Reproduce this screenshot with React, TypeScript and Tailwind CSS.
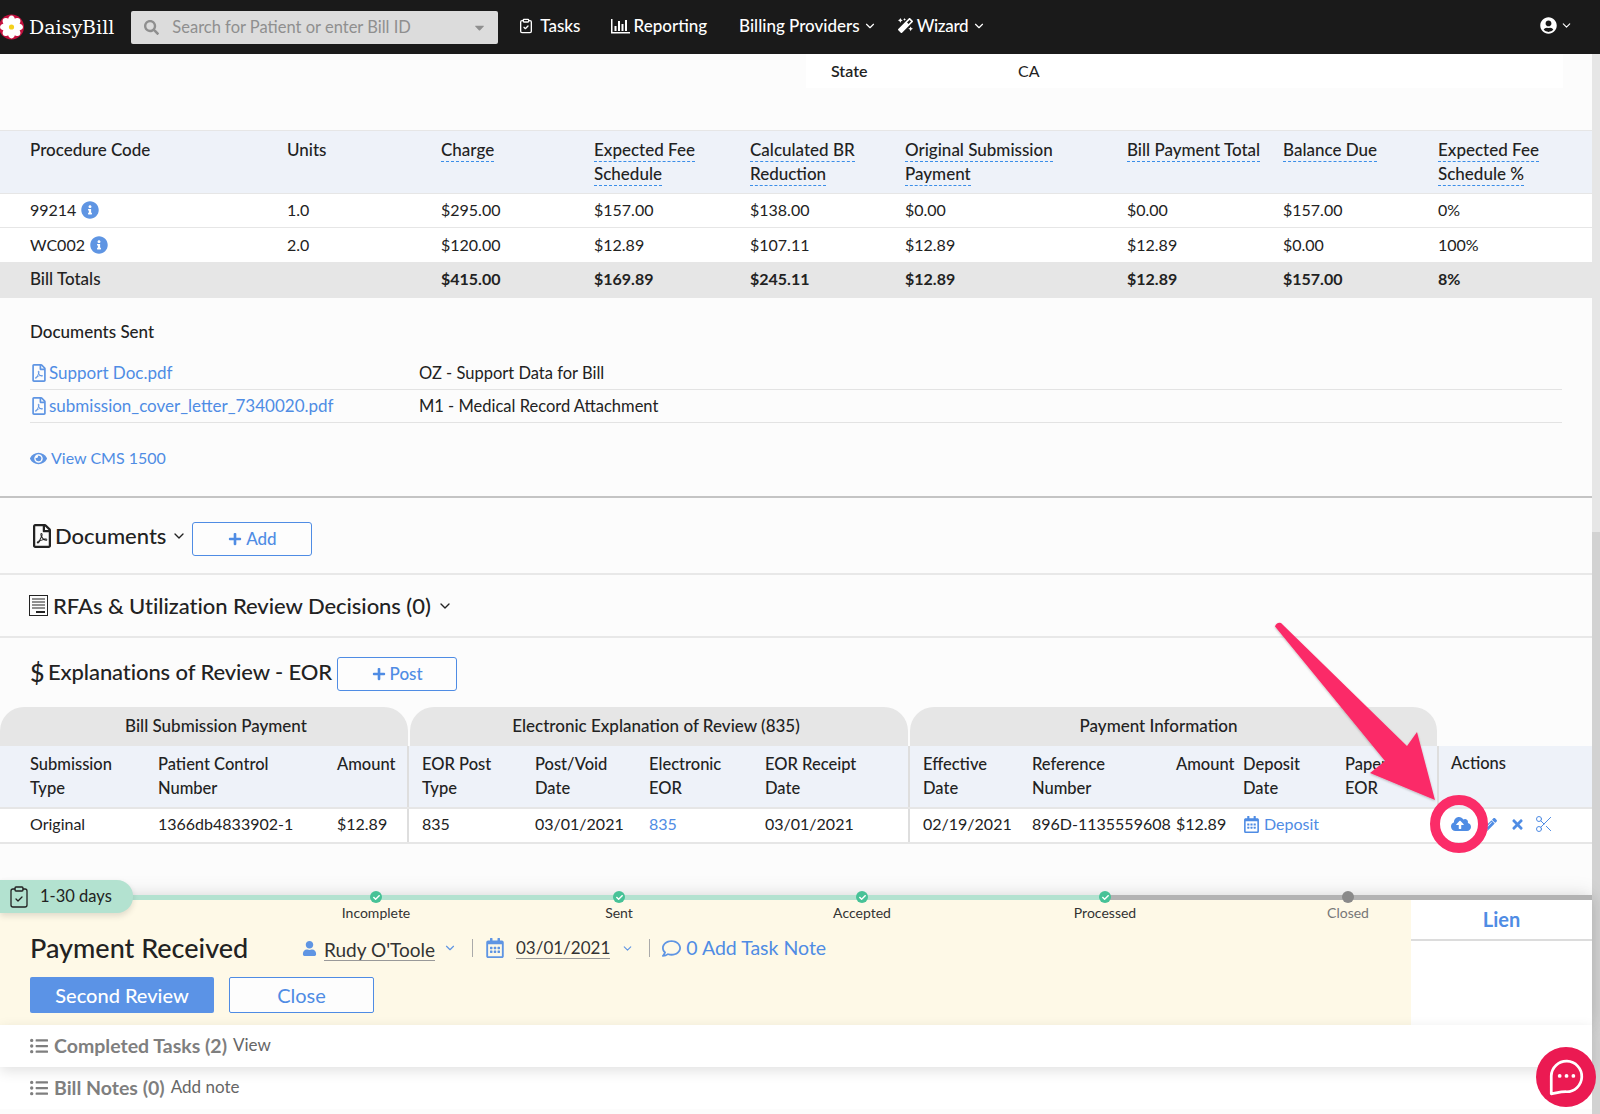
import React from "react";
import { ChevronDown, ClipboardCheck, Scissors } from "lucide-react";
import {
  FaInfoCircle, FaRegFilePdf, FaEye, FaPlus, FaCloudUploadAlt, FaPencilAlt, FaTimes,
  FaRegCalendarAlt, FaUser, FaRegComment, FaListUl, FaUserCircle, FaMagic, FaSearch, FaCheck, FaCaretDown,
} from "react-icons/fa";

const font = { fontFamily: "Lato, 'Open Sans', sans-serif" };

function Daisy() {
  const petals = [0, 45, 90, 135, 180, 225, 270, 315];
  return (
    <svg width="25" height="26" viewBox="-12.5 -13 25 26" className="shrink-0 -ml-[1px]">
      <circle r="12.5" fill="#c3113f" />
      {petals.map((a) => (
        <ellipse key={a} cx="0" cy="-6.5" rx="3.6" ry="5" fill="#fff" transform={`rotate(${a})`} />
      ))}
      <circle r="2.6" fill="#f4d01c" />
    </svg>
  );
}

function Bars() {
  return (
    <svg width="19" height="16" viewBox="0 0 19 16" fill="#fff" className="shrink-0">
      <rect x="0" y="1" width="1.5" height="14" />
      <rect x="0" y="14" width="19" height="1.5" />
      <rect x="3.5" y="8" width="2" height="5" />
      <rect x="7" y="3" width="2" height="10" />
      <rect x="10.5" y="6" width="2" height="7" />
      <rect x="14" y="2" width="2" height="11" />
    </svg>
  );
}

function Tip({ children }: { children: React.ReactNode }) {
  return <span className="border-b border-dashed border-[#3b8ee8] pb-[1px]">{children}</span>;
}

const billCols = "grid grid-cols-[257px_154px_153px_156px_155px_222px_156px_155px_1fr]";

function Info() {
  return <FaInfoCircle className="inline text-[#5f95e3] text-[18px] ml-[5px] -mt-[2px]" />;
}

function BillTable() {
  return (
    <div className="text-[16px] text-[#222]">
      <div className={`${billCols} h-[64px] pl-[30px] pt-[7px] bg-[#eef2f9] border-y border-[#e6e6e6] leading-[24px] font-medium text-[17px]`}>
        <div>Procedure Code</div>
        <div>Units</div>
        <div><Tip>Charge</Tip></div>
        <div><div><Tip>Expected Fee</Tip></div><div><Tip>Schedule</Tip></div></div>
        <div><div><Tip>Calculated BR</Tip></div><div><Tip>Reduction</Tip></div></div>
        <div><div><Tip>Original Submission</Tip></div><div><Tip>Payment</Tip></div></div>
        <div className="whitespace-nowrap"><Tip>Bill Payment Total</Tip></div>
        <div><Tip>Balance Due</Tip></div>
        <div><div><Tip>Expected Fee</Tip></div><div><Tip>Schedule %</Tip></div></div>
      </div>
      <div className={`${billCols} h-[34px] items-center pl-[30px] pb-[2px] bg-white border-b border-[#e6e6e6]`}>
        <div>99214<Info /></div>
        <div>1.0</div><div>$295.00</div><div>$157.00</div><div>$138.00</div><div>$0.00</div><div>$0.00</div><div>$157.00</div><div>0%</div>
      </div>
      <div className={`${billCols} h-[34px] items-center pl-[30px] pb-[1px] bg-white`}>
        <div>WC002<Info /></div>
        <div>2.0</div><div>$120.00</div><div>$12.89</div><div>$107.11</div><div>$12.89</div><div>$12.89</div><div>$0.00</div><div>100%</div>
      </div>
      <div className={`${billCols} h-[36px] items-center pl-[30px] pb-[2px] bg-[#e6e6e6] font-bold`}>
        <div className="font-medium text-[17px]">Bill Totals</div>
        <div></div><div>$415.00</div><div>$169.89</div><div>$245.11</div><div>$12.89</div><div>$12.89</div><div>$157.00</div><div>8%</div>
      </div>
    </div>
  );
}

function DocRow({ name, type }: { name: string; type: string }) {
  return (
    <div className="flex items-center h-[33px] mr-[30px] border-b border-[#e3e3e3] text-[16.5px]">
      <div className="w-[389px] flex items-center gap-[1px] text-[#4f8ce4] text-[17px]">
        <FaRegFilePdf className="text-[18px] text-[#5f95e3]" />
        <span>{name}</span>
      </div>
      <div className="text-[#222]">{type}</div>
    </div>
  );
}

function OutlineButton({ label, className }: { label: string; className: string }) {
  return (
    <div className={`w-[120px] h-[34px] flex items-center justify-center gap-[4px] border border-[#4f8ce4] rounded-[3px] text-[#4f8ce4] text-[17px] bg-[#fdfdfd] ${className}`}>
      <FaPlus className="text-[14px]" />
      <span>{label}</span>
    </div>
  );
}

function Cols({ cols, items, cls }: { cols: string; items: React.ReactNode[]; cls: string }) {
  return (
    <div className={`grid ${cols} ${cls}`}>
      {items.map((it, i) => <div key={i}>{it}</div>)}
    </div>
  );
}

function EorTable() {
  const c1 = "grid-cols-[128px_179px_1fr]";
  const c2 = "grid-cols-[113px_114px_116px_1fr]";
  const c3 = "grid-cols-[109px_144px_67px_102px_1fr]";
  return (
    <div className="text-[16px] text-[#222]">
      <div className="flex h-[39px] font-medium text-[17px]">
        <div className="w-[408px] pl-[24px] pb-[1px] rounded-t-[24px] bg-[#e6e6e6] flex items-center justify-center">Bill Submission Payment</div>
        <div className="w-[498px] ml-[2px] pr-[6px] pb-[1px] rounded-t-[24px] bg-[#e6e6e6] flex items-center justify-center">Electronic Explanation of Review (835)</div>
        <div className="w-[527px] ml-[2px] pr-[30px] pb-[1px] rounded-t-[24px] bg-[#e6e6e6] flex items-center justify-center">Payment Information</div>
      </div>
      <div className="flex h-[63px] bg-[#eef2f9] border-b-2 border-[#e6e6e6] leading-[24px] font-medium text-[16.5px]">
        <div className="w-[409px] pl-[30px] pt-[6px] border-r-2 border-[#dedede]">
          <Cols cols={c1} cls="" items={[<>Submission<br />Type</>, <>Patient Control<br />Number</>, "Amount"]} />
        </div>
        <div className="w-[501px] pl-[13px] pt-[6px] border-r-2 border-[#dedede]">
          <Cols cols={c2} cls="" items={[<>EOR Post<br />Type</>, <>Post/Void<br />Date</>, <>Electronic<br />EOR</>, <>EOR Receipt<br />Date</>]} />
        </div>
        <div className="w-[529px] pl-[13px] pt-[6px] border-r-2 border-[#dedede]">
          <Cols cols={c3} cls="" items={[<>Effective<br />Date</>, <>Reference<br />Number</>, "Amount", <>Deposit<br />Date</>, <>Paper<br />EOR</>]} />
        </div>
        <div className="pl-[12px] pt-[5px]">Actions</div>
      </div>
      <div className="flex h-[35px] bg-white border-b-2 border-[#e6e6e6] items-stretch">
        <div className="w-[409px] pl-[30px] pb-[3px] flex items-center border-r-2 border-[#dedede]">
          <Cols cols={c1} cls="w-full" items={["Original", "1366db4833902-1", "$12.89"]} />
        </div>
        <div className="w-[501px] pl-[13px] pb-[3px] flex items-center border-r-2 border-[#dedede]">
          <Cols cols={c2} cls="w-full" items={["835", "03/01/2021", <span className="text-[#4f8ce4]">835</span>, "03/01/2021"]} />
        </div>
        <div className="w-[529px] pl-[13px] pb-[3px] flex items-center">
          <Cols cols={c3} cls="w-full" items={["02/19/2021", "896D-1135559608", "$12.89",
            <span className="flex items-center gap-[4px] text-[#4f8ce4]"><FaRegCalendarAlt className="text-[17px]" />Deposit</span>, ""]} />
        </div>
        <div className="flex items-center text-[#4f8ce4] pl-[12px] pb-[3px]">
          <FaCloudUploadAlt className="text-[20px] w-[20px]" />
          <FaPencilAlt className="text-[13px] ml-[13px]" />
          <FaTimes className="text-[15px] ml-[13px]" />
          <Scissors size={20} strokeWidth={1.2} className="ml-[9px]" />
        </div>
      </div>
    </div>
  );
}

function Step({ label, done = true }: { label: string; done?: boolean }) {
  return (
    <div className="w-0 flex flex-col items-center relative -top-[9px]">
      <div className={`w-[12px] h-[12px] shrink-0 rounded-full flex items-center justify-center ${done ? "bg-[#47c297]" : "bg-[#8a8a8a]"}`}>
        {done && <FaCheck className="text-white text-[7px]" />}
      </div>
      <div className={`mt-[1px] text-[14px] leading-[17px] whitespace-nowrap ${done ? "text-[#333]" : "text-[#777]"}`}>{label}</div>
    </div>
  );
}

function StatusPanel() {
  return (
    <div className="relative shadow-[0_-4px_18px_rgba(0,0,0,0.07),0_4px_14px_rgba(0,0,0,0.12)] bg-white">
      <div className="h-[5px] flex">
        <div className="w-[1106px] bg-[#b3e2d0]" />
        <div className="flex-1 bg-[#b3b3b3]" />
      </div>
      <div className="flex h-[125px]">
        <div className="w-[1411px] bg-[#fef9e7] pl-[30px] text-[16px]">
          <div className="flex h-[15px] ml-[346px] gap-[243px]">
            <Step label="Incomplete" />
            <Step label="Sent" />
            <Step label="Accepted" />
            <Step label="Processed" />
            <Step label="Closed" done={false} />
          </div>
          <div className="flex items-center mt-[16px] h-[34px]">
            <div className="w-[272px] text-[27px] font-medium text-[#222] whitespace-nowrap">Payment Received</div>
            <FaUser className="text-[#5f95e3] text-[15px]" />
            <span className="ml-[7px] text-[19px] text-[#333] border-b border-[#999] leading-[21px] mt-[3px]">Rudy O'Toole</span>
            <ChevronDown size={14} className="text-[#5f95e3] ml-[8px]" />
            <div className="w-px h-[18px] bg-[#aaa] ml-[15px]" />
            <FaRegCalendarAlt className="text-[#5f95e3] text-[20px] ml-[12px]" />
            <span className="ml-[11px] text-[17px] text-[#333] border-b border-[#999] leading-[21px]">03/01/2021</span>
            <ChevronDown size={13} className="text-[#5f95e3] ml-[11px]" />
            <div className="w-px h-[18px] bg-[#aaa] ml-[15px]" />
            <FaRegComment className="text-[#5f95e3] text-[19px] ml-[12px]" />
            <span className="ml-[5px] text-[19.5px] text-[#4f8ce4] whitespace-nowrap">0 Add Task Note</span>
          </div>
          <div className="flex mt-[12px] gap-[15px]">
            <div className="w-[184px] h-[36px] pb-[1px] rounded-[2px] bg-[#5b93e6] text-white text-[20px] font-medium flex items-center justify-center">Second Review</div>
            <div className="w-[145px] h-[36px] pb-[1px] rounded-[2px] bg-[#fdfdfd] border border-[#4f8ce4] text-[#4f8ce4] text-[20px] flex items-center justify-center">Close</div>
          </div>
        </div>
        <div className="flex-1 bg-white">
          <div className="h-[41px] pb-[2px] border-b-2 border-[#dcdcdc] text-[20px] font-bold text-[#4f8ce4] flex items-center justify-center">Lien</div>
        </div>
      </div>
      <div className="absolute left-0 -top-[15px] w-[133px] h-[33px] rounded-r-[16px] bg-[#b3e2d0] flex items-center pl-[7px] gap-[9px] text-[16.5px] text-[#222] shadow-[0_3px_6px_rgba(0,0,0,0.12)]">
        <ClipboardCheck size={24} strokeWidth={1.3} />
        <span>1-30 days</span>
      </div>
    </div>
  );
}

function Overlay() {
  return (
    <svg className="absolute left-0 top-0 pointer-events-none" width="1600" height="1114" viewBox="0 0 1600 1114">
      <defs>
        <filter id="s" x="-10%" y="-10%" width="120%" height="120%">
          <feDropShadow dx="0" dy="1" stdDeviation="1.2" floodColor="#000" floodOpacity="0.25" />
        </filter>
      </defs>
      <g filter="url(#s)">
        <path d="M1275 626.5 Q1276.5 622 1281 623 L1407 746 L1417 732 L1435 800 L1370 773 L1385 761 Z" fill="#fb2c68" />
      </g>
      <circle cx="1459" cy="824" r="24" fill="none" stroke="#fb2c68" strokeWidth="10" />
    </svg>
  );
}

function Chat() {
  return (
    <div className="absolute left-[1536px] top-[1047px] w-[60px] h-[60px] rounded-full bg-[#eb1a52] flex items-center justify-center">
      <svg width="38" height="40" viewBox="0 0 36 38" fill="none">
        <path d="M4 33 V18 A14.5 14.5 0 1 1 18 33 C12 33 10 34 4 35 Z" stroke="#fff" strokeWidth="2.6" strokeLinejoin="round" />
        <circle cx="12" cy="18" r="1.8" fill="#fff" /><circle cx="18.5" cy="18" r="1.8" fill="#fff" /><circle cx="25" cy="18" r="1.8" fill="#fff" />
      </svg>
    </div>
  );
}

export default function App() {
  return (
    <div className="relative w-[1600px] h-[1114px] overflow-hidden bg-[#fcfcfc]" style={font}>
      <nav className="h-[54px] bg-[#1a1a1a] flex items-center text-white text-[17px] font-medium">
        <Daisy />
        <span className="ml-[5px] text-[19px] font-normal" style={{ fontFamily: "'DejaVu Serif', serif" }}>DaisyBill</span>
        <div className="ml-[17px] w-[367px] h-[33px] rounded-[2px] bg-[#dcdcdc] flex items-center pl-[13px] pr-[11px] text-[#8f8f8f] text-[16.5px] font-normal">
          <FaSearch className="text-[15px]" />
          <span className="ml-[13px] flex-1">Search for Patient or enter Bill ID</span>
          <FaCaretDown className="text-[15px]" />
        </div>
        <div className="flex items-center flex-1 pb-[3px]">
          <ClipboardCheck size={16} className="ml-[20px]" />
          <span className="ml-[6px]">Tasks</span>
          <span className="ml-[30px]"><Bars /></span>
          <span className="ml-[4px]">Reporting</span>
          <span className="ml-[32px]">Billing Providers</span>
          <ChevronDown size={14} className="ml-[3px]" />
          <FaMagic className="ml-[21px] text-[15px]" />
          <span className="ml-[4px] tracking-[-0.3px]">Wizard</span>
          <ChevronDown size={14} className="ml-[4px]" />
          <div className="ml-auto mr-[27px] flex items-center gap-[3px]">
            <FaUserCircle className="text-[17px]" />
            <ChevronDown size={13} />
          </div>
        </div>
      </nav>

      <div className="flex h-[1060px]">
        <main className="w-[1592px]">
          <div className="ml-[806px] mr-[29px] h-[34px] bg-white flex items-center pl-[25px] text-[16px] text-[#222]">
            <span className="w-[187px] font-semibold">State</span>
            <span>CA</span>
          </div>
          <div className="mt-[42px]"><BillTable /></div>

          <div className="pl-[30px] mt-[22px] text-[17px] leading-[24px] font-medium text-[#222]">Documents Sent</div>
          <div className="pl-[30px] mt-[13px]">
            <DocRow name="Support Doc.pdf" type="OZ - Support Data for Bill" />
            <DocRow name="submission_cover_letter_7340020.pdf" type="M1 - Medical Record Attachment" />
          </div>
          <div className="pl-[30px] mt-[25px] flex items-center gap-[4px] text-[#4f8ce4] text-[16px] h-[20px]">
            <FaEye className="text-[17px] text-[#5f95e3]" />
            <span>View CMS 1500</span>
          </div>
          <div className="mt-[28px] border-t-2 border-[#c4c4c4]" />

          <div className="h-[77px] pl-[30px] flex items-center border-b-2 border-[#e8e8e8] text-[22px] font-medium text-[#222]">
            <FaRegFilePdf className="text-[24px] mr-[1px]" />
            <span>Documents</span>
            <ChevronDown size={16} className="ml-[5px] mr-[5px]" />
            <OutlineButton label="Add" className="mt-[6px]" />
          </div>
          <div className="h-[63px] pl-[29px] flex items-center border-b-2 border-[#e8e8e8] text-[22px] font-medium text-[#222]">
            <svg width="19" height="21" viewBox="0 0 19 21" className="mr-[5px]" fill="none" stroke="#222">
              <rect x="0.5" y="0.5" width="18" height="20" />
              <path d="M3 4 H16 M3 7 H16 M3 10 H16 M3 13 H16" />
              <path d="M7 17 H16" strokeWidth="2" />
            </svg>
            <span className="tracking-[-0.05px]">RFAs &amp; Utilization Review Decisions (0)</span>
            <ChevronDown size={16} className="ml-[6px]" />
          </div>
          <div className="h-[69px] pl-[30px] pt-[17px] flex items-start text-[22px] font-medium text-[#222]">
            <span className="text-[25px] leading-[30px] w-[18px] mt-[2px]">$</span>
            <span className="leading-[30px] mt-[2px] whitespace-nowrap tracking-[-0.1px]">Explanations of Review - EOR</span>
            <OutlineButton label="Post" className="ml-[5px] mt-[2px]" />
          </div>

          <EorTable />

          <div className="h-[51px]" />
          <StatusPanel />

          <div className="h-[42px] bg-white pl-[30px] flex items-center text-[#7f7f7f] relative shadow-[0_4px_14px_rgba(0,0,0,0.12)]">
            <FaListUl className="text-[18px] mr-[6px]" />
            <span className="text-[19.5px] font-bold">Completed Tasks (2)</span>
            <span className="ml-[6px] text-[17px] -mt-[2px] text-[#666]">View</span>
          </div>
          <div className="h-[42px] bg-white pl-[30px] flex items-center text-[#7f7f7f]">
            <FaListUl className="text-[18px] mr-[6px]" />
            <span className="text-[19.5px] font-bold">Bill Notes (0)</span>
            <span className="ml-[6px] text-[17px] -mt-[2px] text-[#666]">Add note</span>
          </div>
        </main>
        <div className="w-[8px] flex flex-col">
          <div className="h-[478px] bg-[#e6e6e6]" />
          <div className="flex-1 bg-[#d2d2d2]" />
        </div>
      </div>

      <Overlay />
      <Chat />
    </div>
  );
}
